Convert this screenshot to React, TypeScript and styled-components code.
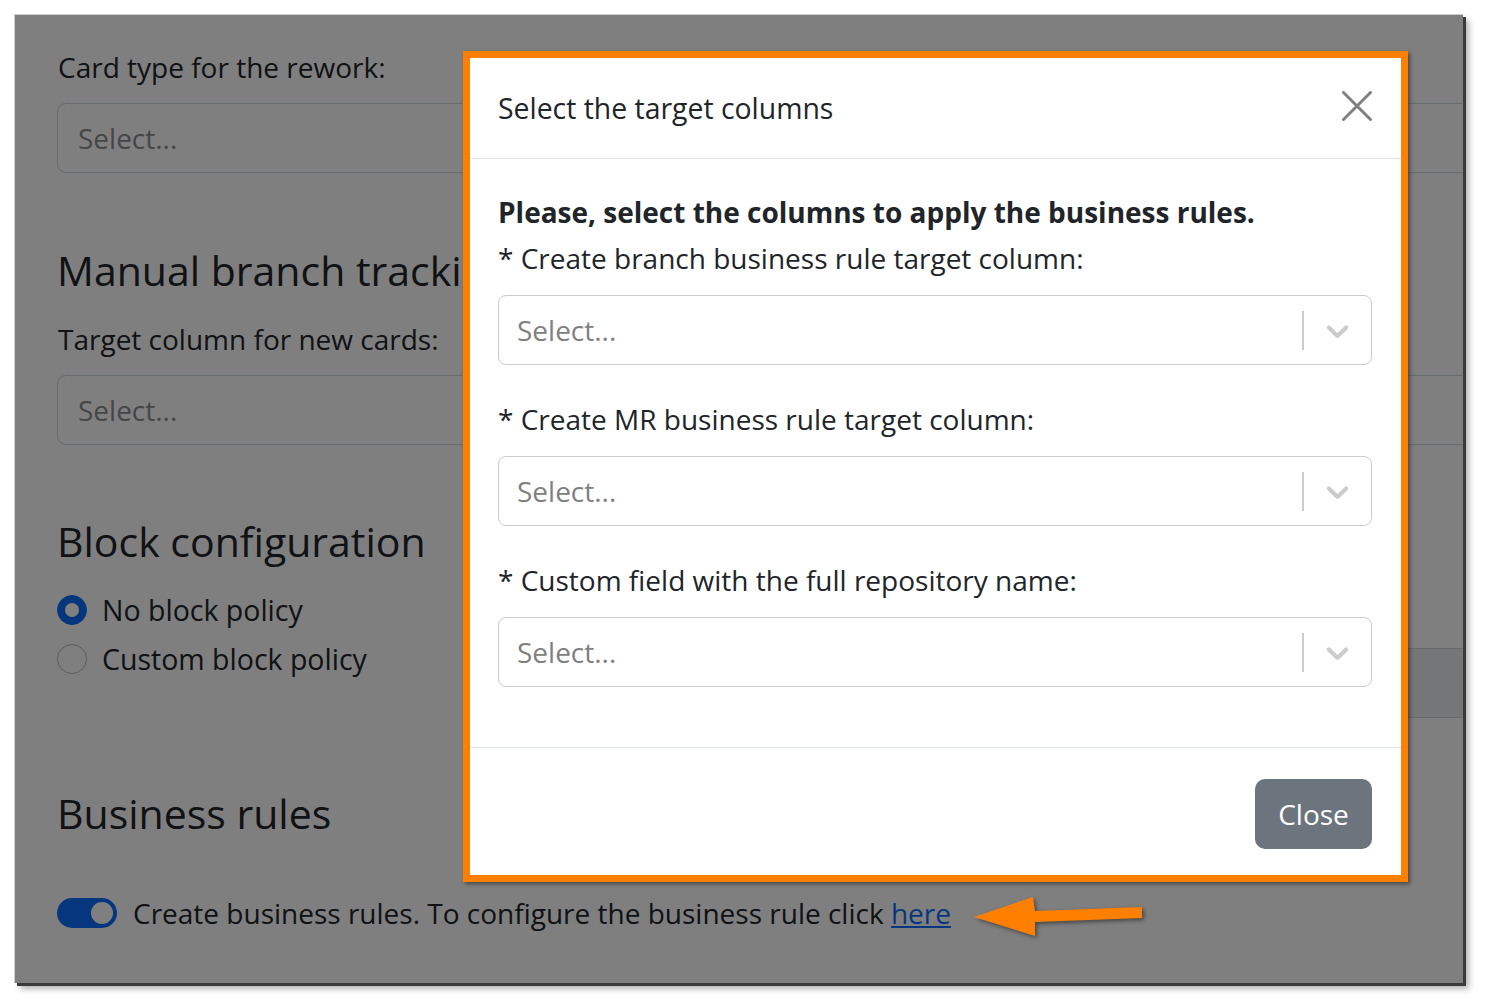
import styled, { createGlobalStyle } from "styled-components";

const GlobalStyle = createGlobalStyle`
  html, body {
    margin: 0;
    padding: 0;
    background: #fff;
  }
  body {
    font-family: "Open Sans", "Noto Sans", sans-serif;
    color: #212529;
  }
  * {
    box-sizing: border-box;
  }
`;

const Stage = styled.div`
  width: 1489px;
  height: 1008px;
  padding: 14px;
`;

const Frame = styled.div`
  position: relative;
  width: 1449px;
  height: 969px;
  overflow: hidden;
  background: #fff;
  border-left: 1px solid #cfcfcf;
  border-top: 1px solid #cfcfcf;
  box-shadow: 3px 3px 0 #3a3a3a, 6px 6px 6px rgba(0, 0, 0, 0.3);
`;

const Page = styled.div`
  padding: 31px 0 0 42px;
  font-size: 28px;
  line-height: 42px;
`;

const Label = styled.div`
  margin: 0 0 15px 1px;
`;

const FakeInput = styled.div<{ $disabled?: boolean }>`
  display: flex;
  align-items: center;
  height: 70px;
  width: calc(100% + 40px);
  padding-left: 20px;
  border: 1px solid #ced4da;
  border-radius: 9px;
  color: #8c8c8c;
  background: ${(p) => (p.$disabled ? "#e9ecef" : "#fff")};
`;

const Heading = styled.h4<{ $top: number }>`
  margin: ${(p) => p.$top}px 0 23px;
  font-size: 41px;
  line-height: 50px;
  font-weight: 400;
`;

const BlockRow = styled.div`
  display: grid;
  grid-template-columns: 700px 1fr;
`;

const RadioList = styled.div`
  display: flex;
  flex-direction: column;
  gap: 7px;
`;

const RadioRow = styled.label`
  display: flex;
  align-items: center;
  gap: 15px;
  font-size: 28.5px;
`;

const Radio = styled.span<{ $checked?: boolean }>`
  width: 30px;
  height: 30px;
  border-radius: 50%;
  flex-shrink: 0;
  background: ${(p) => (p.$checked ? "#0d6efd" : "#fff")};
  border: 1px solid ${(p) => (p.$checked ? "#0d6efd" : "#b8b8b8")};
  display: flex;
  align-items: center;
  justify-content: center;

  &::after {
    content: "";
    display: ${(p) => (p.$checked ? "block" : "none")};
    width: 14px;
    height: 14px;
    border-radius: 50%;
    background: #fff;
  }
`;

const PolicyBox = styled(FakeInput)`
  margin-top: 59px;
`;

const SwitchRow = styled.div`
  display: flex;
  align-items: center;
  gap: 16px;
  margin-top: 54px;
`;

const Switch = styled.span`
  width: 60px;
  height: 30px;
  border-radius: 15px;
  background: #0d6efd;
  display: flex;
  align-items: center;
  justify-content: flex-end;
  padding-right: 4px;

  &::after {
    content: "";
    width: 22px;
    height: 22px;
    border-radius: 50%;
    background: #fff;
  }
`;

const Link = styled.a`
  color: #0d6efd;
  text-decoration: underline;
`;

const Backdrop = styled.div`
  position: absolute;
  inset: 0;
  background: rgba(0, 0, 0, 0.5);
`;

const Highlight = styled.div`
  position: absolute;
  left: 448px;
  top: 36px;
  width: 945px;
  height: 831px;
  border: 7px solid #ff8000;
  box-shadow: 2px 2px 4px rgba(0, 0, 0, 0.45);
`;

const Modal = styled.div`
  display: flex;
  flex-direction: column;
  height: 100%;
  background: #fff;
  font-size: 28px;
  line-height: 42px;
  color: #212529;
`;

const ModalHeader = styled.div`
  display: flex;
  align-items: center;
  justify-content: space-between;
  height: 101px;
  padding: 0 29px 0 28px;
  border-bottom: 1px solid #dee2e6;
`;

const ModalTitle = styled.div`
  font-size: 28.4px;
`;

const CloseX = styled.button`
  width: 30px;
  height: 30px;
  padding: 0;
  margin-bottom: 4px;
  border: none;
  background: none;
  display: flex;
`;

const ModalBody = styled.div`
  padding: 32px 29px 60px 28px;
`;

const Lead = styled.div`
  font-weight: 700;
  margin-bottom: 4px;
`;

const Field = styled.div<{ $first?: boolean }>`
  margin-top: ${(p) => (p.$first ? 0 : 33)}px;
`;

const FieldLabel = styled.div`
  margin-bottom: 16px;
`;

const SelectBox = styled.div`
  display: flex;
  align-items: center;
  height: 70px;
  border: 1px solid #cccccc;
  border-radius: 8px;
  background: #fff;
`;

const Placeholder = styled.div`
  flex: 1;
  padding-left: 18px;
  color: #808080;
`;

const Separator = styled.span`
  width: 2px;
  height: 39px;
  background: #cccccc;
`;

const Indicator = styled.div`
  display: flex;
  padding: 15px;
  color: #cccccc;
`;

const ModalFooter = styled.div`
  display: flex;
  justify-content: flex-end;
  padding: 31px 29px 25px;
  border-top: 1px solid #dee2e6;
`;

const CloseButton = styled.button`
  width: 117px;
  height: 70px;
  border: none;
  border-radius: 10px;
  background: #6c757d;
  color: #fff;
  font-family: inherit;
  font-size: 28px;
`;

const Arrow = styled.svg`
  position: absolute;
  left: 940px;
  top: 865px;
  overflow: visible;
  filter: drop-shadow(2px 2px 2px rgba(0, 0, 0, 0.45));
`;

function Chevron() {
  return (
    <svg width="37" height="37" viewBox="0 0 20 20" fill="currentColor">
      <path d="M4.516 7.548c0.436-0.446 1.043-0.481 1.576 0l3.908 3.747 3.908-3.747c0.533-0.481 1.141-0.446 1.574 0 0.436 0.445 0.408 1.197 0 1.615-0.406 0.418-4.695 4.502-4.695 4.502-0.217 0.223-0.502 0.335-0.787 0.335s-0.57-0.112-0.789-0.335c0 0-4.287-4.084-4.695-4.502s-0.436-1.17 0-1.615z" />
    </svg>
  );
}

function ColumnSelect({ label, first }: { label: string; first?: boolean }) {
  return (
    <Field $first={first}>
      <FieldLabel>{label}</FieldLabel>
      <SelectBox>
        <Placeholder>Select...</Placeholder>
        <Separator />
        <Indicator>
          <Chevron />
        </Indicator>
      </SelectBox>
    </Field>
  );
}

export default function App() {
  return (
    <>
      <GlobalStyle />
      <Stage>
        <Frame>
          <Page>
            <Label>Card type for the rework:</Label>
            <FakeInput>Select...</FakeInput>

            <Heading $top={72}>Manual branch tracking</Heading>
            <Label>Target column for new cards:</Label>
            <FakeInput>Select...</FakeInput>

            <Heading $top={71}>Block configuration</Heading>
            <BlockRow>
              <RadioList>
                <RadioRow>
                  <Radio $checked />
                  No block policy
                </RadioRow>
                <RadioRow>
                  <Radio />
                  Custom block policy
                </RadioRow>
              </RadioList>
              <PolicyBox $disabled />
            </BlockRow>

            <Heading $top={70}>Business rules</Heading>
            <SwitchRow>
              <Switch />
              <span>
                Create business rules. To configure the business rule click{" "}
                <Link href="#">here</Link>
              </span>
            </SwitchRow>
          </Page>

          <Backdrop />

          <Highlight>
            <Modal>
              <ModalHeader>
                <ModalTitle>Select the target columns</ModalTitle>
                <CloseX aria-label="Close">
                  <svg width="30" height="30" viewBox="0 0 30 30">
                    <path
                      d="M1.5 1.5 28.5 28.5 M28.5 1.5 1.5 28.5"
                      stroke="#808080"
                      strokeWidth="3"
                      strokeLinecap="round"
                    />
                  </svg>
                </CloseX>
              </ModalHeader>
              <ModalBody>
                <Lead>Please, select the columns to apply the business rules.</Lead>
                <ColumnSelect first label="* Create branch business rule target column:" />
                <ColumnSelect label="* Create MR business rule target column:" />
                <ColumnSelect label="* Custom field with the full repository name:" />
              </ModalBody>
              <ModalFooter>
                <CloseButton>Close</CloseButton>
              </ModalFooter>
            </Modal>
          </Highlight>

          <Arrow width="200" height="70" viewBox="0 0 200 70">
            <polygon
              points="19,37 78,17 80,31 187,27 187,38 80,42 80,56"
              fill="#ff8000"
            />
          </Arrow>
        </Frame>
      </Stage>
    </>
  );
}
